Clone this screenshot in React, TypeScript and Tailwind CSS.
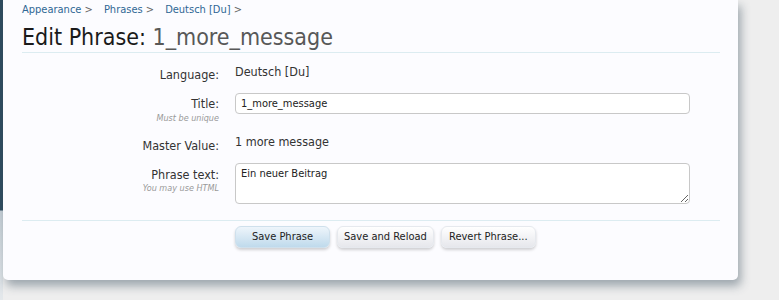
import React from "react";

const font = "font-['DejaVu_Sans_Condensed','DejaVu_Sans',sans-serif]";

const Button = ({ label, primary }: { label: string; primary?: boolean }) => (
  <button
    className={`h-[22px] min-w-[95px] px-[6px] rounded-[6px] text-[11px] text-[#222] shadow-[0_2px_3px_rgba(0,0,0,0.18)] border ${
      primary
        ? "bg-[linear-gradient(to_bottom,#eef5fb,#bfdaec)] border-[#cfe0ec]"
        : "bg-[linear-gradient(to_bottom,#ffffff,#e6e7ec)] border-[#e6e9ee]"
    }`}
  >
    {label}
  </button>
);

const Crumb = ({ label }: { label: string }) => (
  <span className="text-[#2f6794]">
    {label} <span className="text-[#666]">&gt;</span>
  </span>
);

export default function App() {
  return (
    <div className={`flex w-[779px] h-[300px] overflow-hidden bg-[#eeeeee] ${font}`}>
      <div className="w-[3px] shrink-0 bg-[linear-gradient(to_bottom,#2e4b5e_0,#2e4b5e_210px,#c5ced5_211px,#e4e8eb_300px)]" />
      <div className="w-[735px] shrink-0 h-[280px] bg-[#fcfcff] rounded-b-[5px] shadow-[3px_6px_10px_rgba(60,80,95,0.45)] pl-[19px] pr-[18px]">
        <div className="pt-[3px] h-[17px] text-[11px] leading-[14px] flex gap-[11px]">
          <Crumb label="Appearance" />
          <Crumb label="Phrases" />
          <Crumb label="Deutsch [Du]" />
        </div>
        <h1 className="text-[23px] pt-[5px] leading-[30px] h-[36px] text-[#1a1a1a] border-b border-[#dcecf1]">
          Edit Phrase: <span className="text-[#585858]">1_more_message</span>
        </h1>

        <div className="text-[12.5px] text-[#333]">
          <div className="flex gap-[16px] pt-[12px] h-[40px] leading-[14px]">
            <div className="w-[197px] text-right pt-[3px]">Language:</div>
            <div>Deutsch [Du]</div>
          </div>

          <div className="flex gap-[16px] h-[42px]">
            <div className="w-[197px] text-right pt-[4px]">
              <div className="leading-[14px]">Title:</div>
              <div className="text-[9px] italic text-[#999] leading-[12px] mt-[1px]">Must be unique</div>
            </div>
            <input
              className="w-[455px] h-[21px] rounded-[4px] border border-[#c8c8c8] bg-white px-[5px] text-[11px] text-[#222] outline-none"
              defaultValue="1_more_message"
            />
          </div>

          <div className="flex gap-[16px] h-[28px] leading-[14px]">
            <div className="w-[197px] text-right pt-[4px]">Master Value:</div>
            <div>1 more message</div>
          </div>

          <div className="flex gap-[16px] h-[57px]">
            <div className="w-[197px] text-right pt-[5px]">
              <div className="leading-[14px]">Phrase text:</div>
              <div className="text-[9px] italic text-[#999] leading-[12px]">You may use HTML</div>
            </div>
            <textarea
              className="w-[455px] h-[41px] rounded-[4px] border border-[#c8c8c8] bg-white px-[5px] py-[3px] text-[11px] leading-[14px] text-[#222] outline-none"
              defaultValue="Ein neuer Beitrag"
            />
          </div>
        </div>

        <div className="border-t border-[#dcecf1] pt-[5px] pl-[213px] flex gap-[7px]">
          <Button label="Save Phrase" primary />
          <Button label="Save and Reload" />
          <Button label="Revert Phrase..." />
        </div>
      </div>
    </div>
  );
}
